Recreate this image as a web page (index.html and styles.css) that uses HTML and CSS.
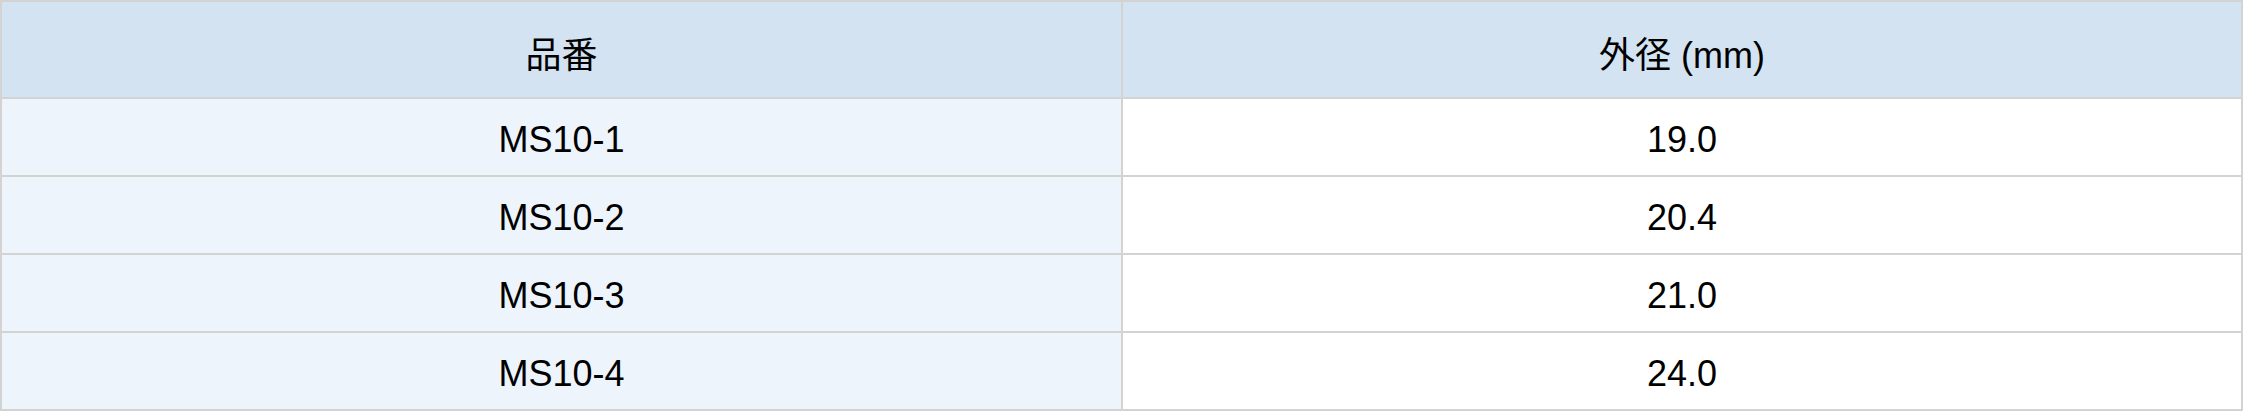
FILE: index.html
```html
<!DOCTYPE html>
<html lang="ja">
<head>
<meta charset="utf-8">
<title>品番表</title>
<link rel="stylesheet" href="styles.css">
</head>
<body>
<div class="spec-table">
  <div class="cell head">品番</div>
  <div class="cell head">外径 (mm)</div>
  <div class="cell key">MS10-1</div>
  <div class="cell val">19.0</div>
  <div class="cell key">MS10-2</div>
  <div class="cell val">20.4</div>
  <div class="cell key">MS10-3</div>
  <div class="cell val">21.0</div>
  <div class="cell key">MS10-4</div>
  <div class="cell val">24.0</div>
</div>
</body>
</html>
```
FILE: styles.css
```css
html, body {
  margin: 0;
  padding: 0;
  background: #ffffff;
}
.spec-table {
  display: grid;
  grid-template-columns: 1119px 1fr;
  grid-template-rows: 95px;
  grid-auto-rows: 76px;
  gap: 2px;
  padding: 2px;
  background: #d3d3d3;
  font-family: "Liberation Sans", "Noto Sans CJK JP", sans-serif;
  font-size: 36px;
  color: #000000;
}
.cell {
  display: flex;
  align-items: center;
  justify-content: center;
  padding-top: 5px;
  box-sizing: border-box;
}
.head {
  background: #d3e3f2;
}
.key {
  background: #edf4fb;
}
.val {
  background: #ffffff;
}
```
